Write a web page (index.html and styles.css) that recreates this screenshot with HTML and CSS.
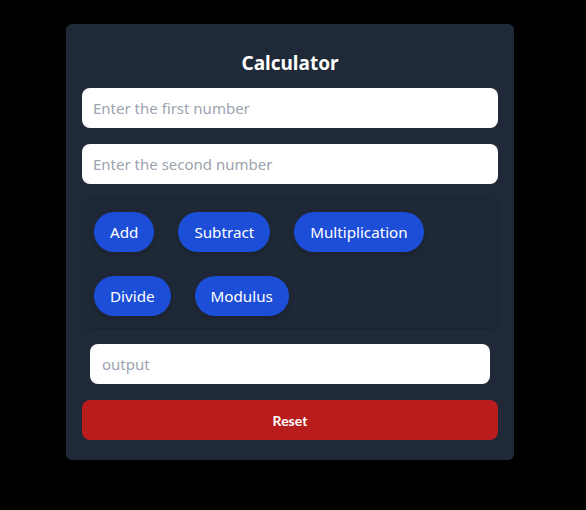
FILE: index.html
```html
<!DOCTYPE html>
<html lang="en">
<head>
<meta charset="utf-8">
<title>Calculator</title>
<link rel="stylesheet" href="styles.css">
</head>
<body>
<main class="page">
  <section class="card">
    <h1 class="title">Calculator</h1>
    <input class="field" type="text" placeholder="Enter the first number" autofocus>
    <input class="field" type="text" placeholder="Enter the second number">
    <div class="ops">
      <button class="op">Add</button>
      <button class="op">Subtract</button>
      <button class="op">Multiplication</button>
      <button class="op">Divide</button>
      <button class="op">Modulus</button>
    </div>
    <input class="field output" type="text" placeholder="output" readonly>
    <button class="reset">Reset</button>
  </section>
</main>
</body>
</html>
```

FILE: styles.css
```css
* { box-sizing: border-box; }
html, body { margin: 0; padding: 0; background: #000; }
body {
  font-family: "Noto Sans", "Open Sans", sans-serif;
  width: 586px;
  height: 510px;
}
.page {
  padding: 24px 0 0 66px;
}
.card {
  width: 448px;
  background: #1f2937;
  border-radius: 6px;
  padding: 16px 16px 20px;
  display: flex;
  flex-direction: column;
}
.title {
  margin: 0;
  height: 48px;
  line-height: 46px;
  font-size: 19px;
  font-weight: 700;
  color: #fff;
  text-align: center;
}
.field {
  display: block;
  width: 100%;
  height: 40px;
  border: none;
  border-radius: 8px;
  background: #fff;
  padding: 0 11px;
  font-family: inherit;
  font-size: 15px;
  color: #111827;
  outline: none;
  caret-color: #f97316;
  margin-bottom: 16px;
}
.field::placeholder { color: #9ca3af; }
.ops {
  display: flex;
  flex-wrap: wrap;
  border-radius: 8px;
  background: #1f2836;
  box-shadow: 0 1px 3px rgba(0,0,0,0.12), 0 0 0 1px rgba(0,0,0,0.04);
  margin-bottom: 16px;
}
.op {
  margin: 12px;
  height: 40px;
  padding: 0 16px;
  border: none;
  border-radius: 20px;
  background: #1d4ed8;
  color: #fff;
  font-family: inherit;
  font-size: 15.2px;
  box-shadow: 0 3px 6px rgba(0,0,0,0.15);
}
.output {
  width: auto;
  margin-left: 8px;
  margin-right: 8px;
  padding: 0 12px;
}
.reset {
  height: 40px;
  border: none;
  border-radius: 8px;
  background: #b91c1c;
  color: #fff;
  font-family: "Lato", "Noto Sans", sans-serif;
  font-weight: 700;
  font-size: 14px;
}
```
